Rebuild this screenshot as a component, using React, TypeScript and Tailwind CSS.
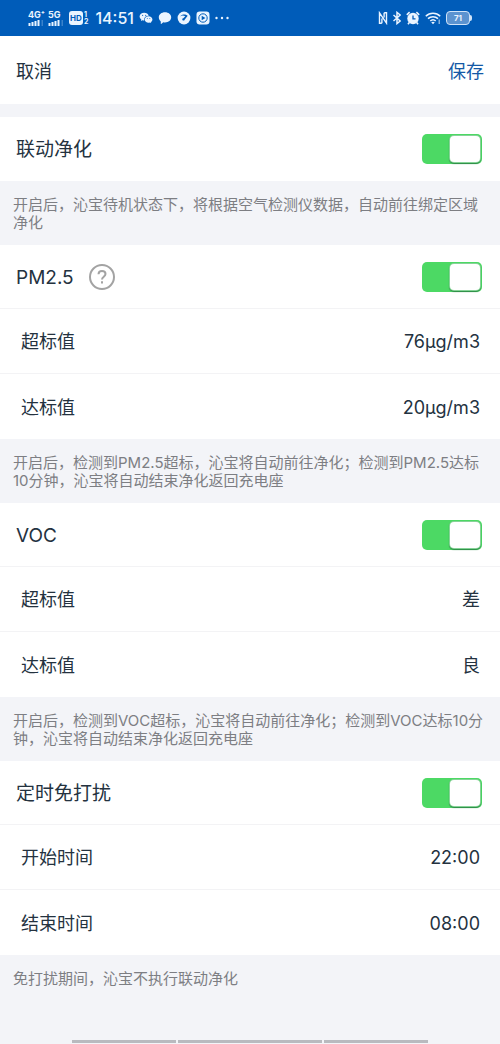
import { useState } from "react";
import type { ReactNode } from "react";
import { RiWechatFill } from "react-icons/ri";

function Signal({ label, bars }: { label: string; bars: number }) {
  return (
    <div className="flex w-4 flex-col gap-px">
      <span className="whitespace-nowrap text-[9px] leading-[8px] font-bold">{label}</span>
      <svg viewBox="0 0 15 6" className="h-1.5 w-4" fill="currentColor" aria-hidden="true">
        <rect x="0" y="3" width="2" height="3" />
        <rect x="3" y="2" width="2" height="4" />
        <rect x="6" y="1" width="2" height="5" />
        <rect x="9" y="0" width="2" height="6" />
        <rect x="13" y="0" width="1.5" height="6" opacity={bars > 4 ? 1 : 0.25} />
      </svg>
    </div>
  );
}

function StatusBar() {
  return (
    <header className="flex h-9 items-center justify-between bg-[#005cb9] px-7 text-[#eaf4ff]">
      <div className="flex items-center">
        <div className="flex gap-1">
          <Signal label="4G⁺" bars={4} />
          <Signal label="5G" bars={4} />
        </div>
        <div className="ml-[5px] flex h-3.5 w-3.5 items-center justify-center rounded-[3px] bg-[#eaf4ff] text-[8px] leading-none font-bold text-[#005cb9]">
          HD
        </div>
        <div className="ml-px flex flex-col text-[7px] leading-[7px] font-bold">
          <span>1</span>
          <span>2</span>
        </div>
        <span className="ml-[7px] w-10 text-base leading-5 font-medium">14:51</span>
        <div className="ml-1 flex items-center gap-[5px]">
          <RiWechatFill className="h-3.5 w-3.5" />
          <svg viewBox="0 0 14 14" className="h-3.5 w-3.5" fill="currentColor" aria-hidden="true">
            <path d="M7 1.2c3.5 0 6.2 2.2 6.2 5.1S10.5 11.4 7 11.4c-.6 0-1.2-.1-1.7-.2L3.2 12.9c-.2.1-.4 0-.4-.2v-2.200C1.5 9.500.8 8 .8 6.300.8 3.400 3.500 1.200 7 1.200z" />
          </svg>
          <svg viewBox="0 0 14 14" className="h-3.5 w-3.5" aria-hidden="true">
            <circle cx="7" cy="7" r="6.4" fill="currentColor" />
            <path d="M3.200 5.400C5 2.900 8.500 2.900 10.700 4.800L7.600 8.700a1.200 1.200 0 1 1-1.300-1.500L8.300 5.200C6.300 4.300 4.700 4.500 3.200 5.400z" fill="#005cb9" />
          </svg>
          <svg viewBox="0 0 14 14" className="h-3.5 w-3.5" aria-hidden="true">
            <rect x=".5" y=".5" width="13" height="13" rx="3.2" fill="currentColor" />
            <circle cx="7" cy="7" r="4.2" fill="none" stroke="#005cb9" strokeWidth="1" />
            <path d="M5.700 4.700v4.600L9.400 7z" fill="#005cb9" />
          </svg>
          <svg viewBox="0 0 14 4" className="h-1 w-3.5" fill="currentColor" aria-hidden="true">
            <circle cx="1.5" cy="2" r="1.2" />
            <circle cx="7" cy="2" r="1.2" />
            <circle cx="12.5" cy="2" r="1.2" />
          </svg>
        </div>
      </div>
      <div className="flex items-center gap-[5px]">
        <svg viewBox="0 0 10 14" className="h-3.5 w-2.5" fill="none" stroke="currentColor" strokeWidth="1.4" aria-hidden="true">
          <path d="M3.800 12.300H1.500V1.900L8.500 12.100V1.700H6.200M3.900 12.300V7.500M6.100 1.700V6.500" />
        </svg>
        <svg viewBox="1 0 8 14" className="h-3.5 w-2" fill="none" stroke="currentColor" strokeWidth="1.5" aria-hidden="true">
          <path d="M1.500 4L8.200 10 5 12.600V1.400L8.200 4 1.500 10" />
        </svg>
        <svg viewBox="0 0 14 14" className="h-3.5 w-3.5" aria-hidden="true">
          <path d="M.8 3.800L3.600 1.200M13.200 3.800L10.400 1.200M3.300 11.500L2 13.200M10.700 11.500L12 13.200" stroke="currentColor" strokeWidth="1.6" />
          <circle cx="7" cy="7.500" r="5.700" fill="currentColor" />
          <path d="M7 4.500v3.400h2.500" fill="none" stroke="#005cb9" strokeWidth="1.3" />
        </svg>
        <svg viewBox="0 0 16 14" className="h-3.5 w-4" fill="none" stroke="currentColor" strokeWidth="1.6" aria-hidden="true">
          <path d="M.8 5.200C4.800 1.300 11.200 1.300 15.200 5.200M3 7.700C5.800 5 10.200 5 13 7.700M5.300 10C6.800 8.600 9.200 8.600 10.700 10" />
          <path d="M6.200 11.300L8 13.200 9.800 11.300C8.800 10.500 7.200 10.500 6.200 11.300z" fill="currentColor" stroke="none" />
          <path d="M14.200 8.500v4.500" strokeWidth="1.2" opacity=".7" />
        </svg>
        <div className="flex items-center">
          <div className="flex h-3.5 w-6 items-center justify-center rounded-[4px] border border-[#cfe3f8] bg-[#5b93d0] text-[8px] leading-none font-bold">
            71
          </div>
          <div className="h-1.5 w-0.5 rounded-r-sm bg-[#cfe3f8]" />
        </div>
      </div>
    </header>
  );
}

function Toggle({ id, defaultOn = true }: { id: string; defaultOn?: boolean }) {
  const [on, setOn] = useState(defaultOn);

  return (
    <label htmlFor={id} className="relative block cursor-pointer">
      <input
        id={id}
        type="checkbox"
        role="switch"
        aria-labelledby={`${id}-title`}
        checked={on}
        onChange={(e) => setOn(e.target.checked)}
        className="peer absolute h-full w-full appearance-none opacity-0"
      />
      <span className="flex h-[30px] w-[60px] rounded-[5px] bg-gray-300 p-px peer-checked:justify-end peer-checked:bg-[#4cd964]">
        <span className="h-7 w-8 rounded-[5px] border border-[#35b552]/60 bg-white shadow-[0_1px_1px_#2f8a48]" />
      </span>
    </label>
  );
}

function SwitchRow({ id, title, children }: { id: string; title: string; children?: ReactNode }) {
  return (
    <div className="flex h-16 items-center justify-between pr-[18px] pl-4">
      <div className="flex items-center gap-[15px]">
        <h2 id={`${id}-title`} className="pt-0.5 text-[19px] leading-6">
          {title}
        </h2>
        {children}
      </div>
      <Toggle id={id} />
    </div>
  );
}

function ValueRow({ label, value }: { label: string; value: string }) {
  return (
    <button type="button" className="flex h-[65px] w-full items-center justify-between pt-0.5 pr-5 pl-[21px] text-lg leading-6">
      <span>{label}</span>
      <span>{value}</span>
    </button>
  );
}

function Note({ children }: { children: ReactNode }) {
  return (
    <p className="h-16 whitespace-pre pt-[15px] pl-[13px] text-[15px] leading-[18px] text-[#7d7e83]">{children}</p>
  );
}

function Group({ children }: { children: ReactNode }) {
  return <section className="divide-y divide-[#f3f3f5] bg-white">{children}</section>;
}

export default function App() {
  return (
    <div className="flex min-h-screen flex-col overflow-hidden bg-[#f3f4f8] font-[Inter,'Noto_Sans_CJK_SC',sans-serif] text-[#24323f]">
      <StatusBar />
      <nav className="mb-[13px] flex h-[68px] items-center justify-between bg-white px-4 pt-1 text-lg">
        <button type="button">取消</button>
        <button type="button" className="text-[#1459a6]">
          保存
        </button>
      </nav>

      <main>
        <Group>
          <SwitchRow id="linkage" title="联动净化" />
        </Group>
        <Note>{"开启后，沁宝待机状态下，将根据空气检测仪数据，自动前往绑定区域\n净化"}</Note>

        <Group>
          <SwitchRow id="pm25" title="PM2.5">
            <button type="button" aria-label="PM2.5" className="text-[#a3a3a3]">
              <svg viewBox="0 0 26 26" className="h-[26px] w-[26px]" fill="none" stroke="currentColor" strokeWidth="2">
                <circle cx="13" cy="13" r="12" />
                <path d="M9.500 10.300c0-2 1.500-3.300 3.500-3.300s3.500 1.300 3.500 3.100c0 2.600-3.500 2.700-3.500 5.400" />
                <path d="M13 17.300v2.200" />
              </svg>
            </button>
          </SwitchRow>
          <ValueRow label="超标值" value="76μg/m3" />
          <ValueRow label="达标值" value="20μg/m3" />
        </Group>
        <Note>
          {"开启后，检测到PM2.5超标，沁宝将自动前往净化；检测到PM2.5达标\n10分钟，沁宝将自动结束净化返回充电座"}
        </Note>

        <Group>
          <SwitchRow id="voc" title="VOC" />
          <ValueRow label="超标值" value="差" />
          <ValueRow label="达标值" value="良" />
        </Group>
        <Note>{"开启后，检测到VOC超标，沁宝将自动前往净化；检测到VOC达标10分\n钟，沁宝将自动结束净化返回充电座"}</Note>

        <Group>
          <SwitchRow id="quiet" title="定时免打扰" />
          <ValueRow label="开始时间" value="22:00" />
          <ValueRow label="结束时间" value="08:00" />
        </Group>
        <Note>免打扰期间，沁宝不执行联动净化</Note>
      </main>

      {/* gesture bars of the system navigation */}
      <footer className="mt-auto grid grid-cols-[104fr_143fr_104fr] gap-0.5 px-[72px] pb-px">
        <div className="h-[3px] bg-[#b9babf]" />
        <div className="h-[3px] bg-[#b9babf]" />
        <div className="h-[3px] bg-[#b9babf]" />
      </footer>
    </div>
  );
}
